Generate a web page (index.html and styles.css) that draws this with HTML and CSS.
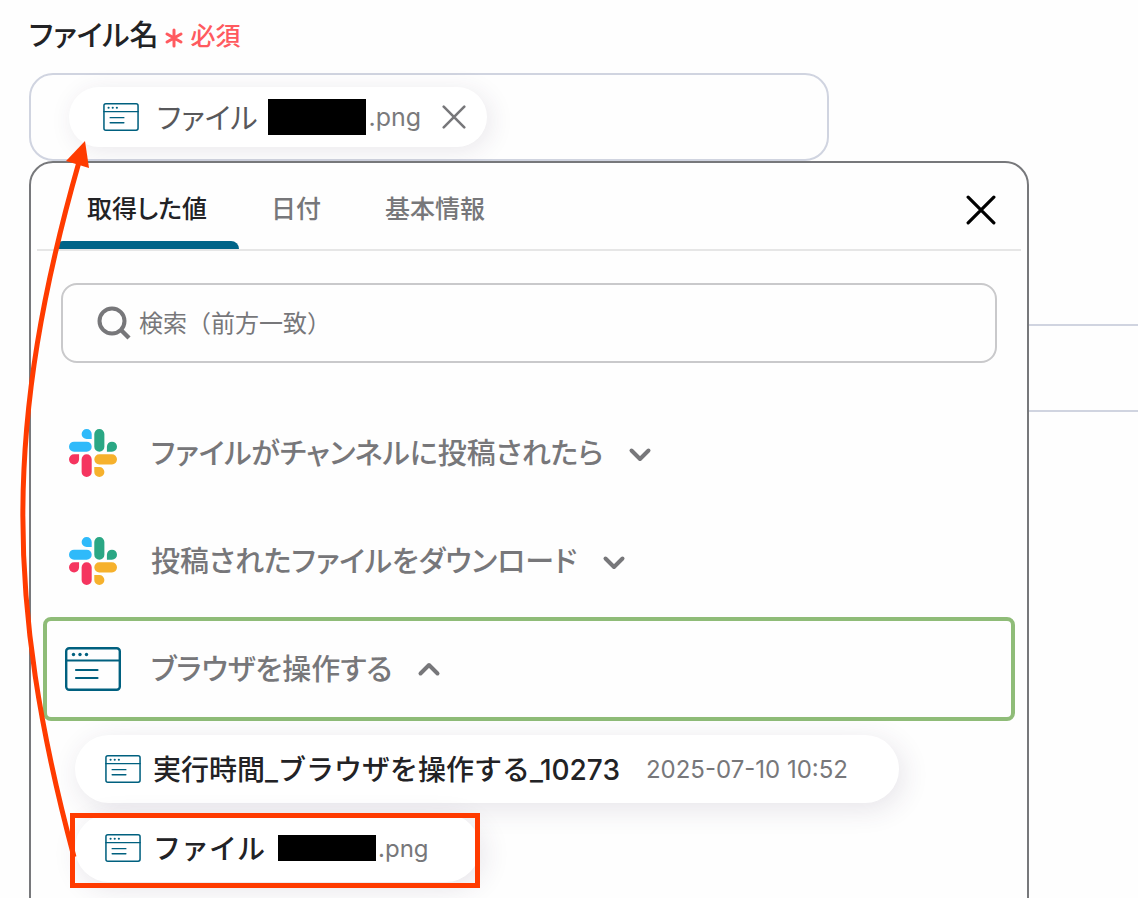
FILE: index.html
```html
<!DOCTYPE html>
<html lang="ja">
<head>
<meta charset="utf-8">
<title>ファイル名</title>
<link rel="stylesheet" href="styles.css">
</head>
<body>
<svg class="sprite" aria-hidden="true">
  <symbol id="browser" viewBox="0 0 56 44">
    <rect x="1.200" y="1.200" width="53.600" height="41.600" rx="3" fill="none" stroke="currentColor" stroke-width="2.400"/>
    <path d="M1 13.500H55M11 23H32.500M11 31H32.500" fill="none" stroke="currentColor" stroke-width="2.200" stroke-linecap="round"/>
    <circle cx="8.500" cy="7.500" r="1.700" fill="currentColor"/><circle cx="15" cy="7.500" r="1.700" fill="currentColor"/><circle cx="21.500" cy="7.500" r="1.700" fill="currentColor"/>
  </symbol>
  <symbol id="slack" viewBox="0 0 24 24">
    <path fill="#f5355f" d="M5.042 15.165a2.528 2.528 0 0 1-2.52 2.523A2.528 2.528 0 0 1 0 15.165a2.527 2.527 0 0 1 2.522-2.52h2.52v2.52zM6.313 15.165a2.527 2.527 0 0 1 2.521-2.52 2.527 2.527 0 0 1 2.521 2.520v6.313A2.528 2.528 0 0 1 8.834 24a2.528 2.528 0 0 1-2.521-2.522v-6.313z"/>
    <path fill="#2fbafa" d="M8.834 5.042a2.528 2.528 0 0 1-2.521-2.520A2.528 2.528 0 0 1 8.834 0a2.528 2.528 0 0 1 2.521 2.522v2.520H8.834zM8.834 6.313a2.528 2.528 0 0 1 2.521 2.521 2.528 2.528 0 0 1-2.521 2.521H2.522A2.528 2.528 0 0 1 0 8.834a2.528 2.528 0 0 1 2.522-2.521h6.312z"/>
    <path fill="#2aa784" d="M18.956 8.834a2.528 2.528 0 0 1 2.522-2.521A2.528 2.528 0 0 1 24 8.834a2.528 2.528 0 0 1-2.522 2.521h-2.522V8.834zM17.688 8.834a2.528 2.528 0 0 1-2.523 2.521 2.527 2.527 0 0 1-2.520-2.521V2.522A2.527 2.527 0 0 1 15.165 0a2.528 2.528 0 0 1 2.523 2.522v6.312z"/>
    <path fill="#f6b12c" d="M15.165 18.956a2.528 2.528 0 0 1 2.523 2.522A2.528 2.528 0 0 1 15.165 24a2.527 2.527 0 0 1-2.520-2.522v-2.522h2.520zM15.165 17.688a2.527 2.527 0 0 1-2.520-2.523 2.526 2.526 0 0 1 2.520-2.520h6.313A2.527 2.527 0 0 1 24 15.165a2.528 2.528 0 0 1-2.522 2.523h-6.313z"/>
  </symbol>
  <symbol id="chevron" viewBox="0 0 24 24">
    <path d="M3.500 8.500L12 17L20.500 8.500" fill="none" stroke="currentColor" stroke-width="4" stroke-linecap="round" stroke-linejoin="round"/>
  </symbol>
  <symbol id="cross" viewBox="0 0 28 28">
    <path d="M2 2L26 26M26 2L2 26" fill="none" stroke="currentColor" stroke-width="3" stroke-linecap="round"/>
  </symbol>
</svg>

<main class="form">
  <h1 class="label">
    <span>ファイル名</span>
    <svg class="label-star" viewBox="0 0 20 20" aria-hidden="true"><path d="M10 2V18M3 6L17 14M17 6L3 14" stroke="currentColor" stroke-width="3" stroke-linecap="round"/></svg>
    <span class="label-required">必須</span>
  </h1>

  <div class="field">
    <div class="token">
      <svg class="icon-small" aria-hidden="true"><use href="#browser"/></svg>
      <span class="token-name">ファイル</span>
      <span class="mask"></span>
      <span class="token-value">.png</span>
      <button class="token-remove" type="button" aria-label="削除"><svg aria-hidden="true"><use href="#cross"/></svg></button>
    </div>

    <section class="panel">
      <div class="tabs">
        <button class="tab tab-active" type="button">取得した値</button>
        <button class="tab" type="button">日付</button>
        <button class="tab" type="button">基本情報</button>
        <button class="panel-close" type="button" aria-label="閉じる"><svg aria-hidden="true"><use href="#cross"/></svg></button>
      </div>

      <label class="search">
        <svg class="search-icon" viewBox="0 0 34 34" aria-hidden="true"><circle cx="15" cy="15" r="12.500" fill="none" stroke="currentColor" stroke-width="4"/><path d="M24 24L32 32" stroke="currentColor" stroke-width="4.500"/></svg>
        <input type="text" placeholder="検索（前方一致）" aria-label="検索">
      </label>

      <div class="groups">
        <button class="group" type="button">
          <span class="group-icon"><svg class="slack" aria-hidden="true"><use href="#slack"/></svg></span>
          <span class="group-name">ファイルがチャンネルに投稿されたら</span>
          <svg class="chevron" aria-hidden="true"><use href="#chevron"/></svg>
        </button>
        <button class="group" type="button">
          <span class="group-icon"><svg class="slack" aria-hidden="true"><use href="#slack"/></svg></span>
          <span class="group-name">投稿されたファイルをダウンロード</span>
          <svg class="chevron" aria-hidden="true"><use href="#chevron"/></svg>
        </button>
        <button class="group group-open" type="button">
          <span class="group-icon"><svg class="icon-large" aria-hidden="true"><use href="#browser"/></svg></span>
          <span class="group-name">ブラウザを操作する</span>
          <svg class="chevron chevron-up" aria-hidden="true"><use href="#chevron"/></svg>
        </button>
      </div>

      <div class="values">
        <button class="value" type="button">
          <svg class="icon-small" aria-hidden="true"><use href="#browser"/></svg>
          <span class="value-name">実行時間_ブラウザを操作する_10273</span>
          <span class="value-time">2025-07-10 10:52</span>
        </button>
        <button class="value value-marked" type="button">
          <svg class="icon-small" aria-hidden="true"><use href="#browser"/></svg>
          <span class="value-name">ファイル</span>
          <span class="mask mask-low"></span>
          <span class="value-text">.png</span>
        </button>
      </div>
    </section>
  </div>

  <div class="field field-next"></div>

  <svg class="arrow" viewBox="0 0 100 760" aria-hidden="true">
    <path d="M74 757C5 500 5 321 79 62" fill="none" stroke="#ff3b00" stroke-width="5"/>
    <path d="M85 41L66 61L89 68Z" fill="#ff3b00"/>
  </svg>
</main>
</body>
</html>
```
FILE: styles.css
```css
* { box-sizing: border-box; }

body {
  margin: 0;
  background: #fefefe;
  color: #222225;
  font-family: Inter, "Noto Sans CJK JP", sans-serif;
  font-size: 24px;
}

button {
  margin: 0;
  padding: 0;
  border: 0;
  background: none;
  color: inherit;
  font: inherit;
  cursor: pointer;
}

svg { display: block; flex: none; }

.sprite { position: absolute; width: 0; height: 0; }

.form {
  position: relative;
  height: 100vh;
  padding: 16px 0 0 29px;
  overflow: hidden;
}

.label {
  display: flex;
  align-items: center;
  margin: 0 0 17px;
  font-size: 29px;
  font-weight: 500;
  line-height: 40px;
  font-feature-settings: "palt";
}

.label-star { width: 20px; height: 20px; margin: 4px 6px 0 6px; color: #ff5a5f; }
.label-required { color: #ff5a5f; font-size: 25px; }

.field {
  position: relative;
  display: flex;
  align-items: center;
  max-width: 800px;
  height: 88px;
  padding: 0 38px;
  border: 2px solid #d0d4e0;
  border-radius: 24px;
}

.field-next {
  max-width: none;
  margin-top: 163px;
  border-right: 0;
  border-radius: 24px 0 0 24px;
}

.token {
  display: flex;
  align-items: center;
  height: 60px;
  padding: 0 21px 0 34px;
  border-radius: 30px;
  background: #fff;
  box-shadow: 4px 4px 24px rgba(60, 40, 80, 0.1);
}

.icon-small { width: 36px; height: 28px; color: #00607f; }
.icon-large { width: 56px; height: 44px; color: #00607f; }

.token-name {
  margin: 0 11px 0 18px;
  padding-bottom: 3px;
  color: #58585b;
  font-size: 29px;
  font-feature-settings: "palt";
}

.mask { width: 98px; height: 36px; background: #000; }
.mask-low { height: 26px; }

.token-value {
  margin-left: 2px;
  color: #7a7a7c;
  font-size: 25px;
}

.token-remove { margin-left: 21px; color: #77777a; }
.token-remove svg { width: 24px; height: 24px; }

.panel {
  position: absolute;
  z-index: 1;
  top: 86px;
  left: -2px;
  width: 1000px;
  max-width: calc(100vw - 58px);
  padding-bottom: 60px;
  border: 2px solid #77787b;
  border-radius: 24px;
  background: #fefefe;
}

.tabs {
  display: flex;
  height: 88px;
  margin: 0 6px;
  padding: 0 25px 0 18px;
  border-bottom: 2px solid #e6e6e6;
}

.tab {
  position: relative;
  padding: 2px 32px 0;
  color: #77777a;
  font-size: 25px;
  font-weight: 500;
  font-feature-settings: "palt";
}

.tab-active { color: #222225; }

.tab-active::after {
  content: "";
  position: absolute;
  inset: auto 0 0;
  height: 8px;
  border-radius: 8px 8px 0 0;
  background: #006488;
}

.panel-close { margin-left: auto; padding-top: 8px; color: #000; }
.panel-close svg { width: 30px; height: 30px; }

.search {
  display: flex;
  align-items: center;
  gap: 8px;
  height: 80px;
  margin: 32px 30px 38px;
  padding: 0 32px 0 34px;
  border: 2px solid #c9c9cb;
  border-radius: 16px;
}

.search-icon { width: 34px; height: 34px; color: #77777a; }

.search input {
  flex: 1;
  min-width: 0;
  padding: 0;
  border: 0;
  outline: 0;
  background: none;
  color: #222225;
  font: inherit;
}

.search input::placeholder { color: #77777a; opacity: 1; }

.groups {
  display: flex;
  flex-direction: column;
  gap: 4px;
  margin: 0 12px 14px;
}

.group {
  display: flex;
  align-items: center;
  height: 104px;
  padding: 0 18px;
  border: 4px solid transparent;
  border-radius: 8px;
  color: #77777a;
  font-size: 29px;
  font-weight: 500;
  font-feature-settings: "palt";
}

.group-open { border-color: #8fbc78; }

.group-icon {
  display: flex;
  justify-content: center;
  width: 56px;
  margin-right: 30px;
}

.group-name { padding-bottom: 4px; }

.slack { width: 48px; height: 48px; }
.chevron { width: 24px; height: 24px; margin: 2px 0 0 25px; }
.chevron-up { transform: rotate(180deg); }

.values {
  display: flex;
  flex-direction: column;
  align-items: flex-start;
  gap: 11px;
  padding-left: 44px;
}

.value {
  display: flex;
  align-items: center;
  height: 68px;
  padding: 0 51px 0 30px;
  border-radius: 34px;
  background: #fff;
  box-shadow: 4px 6px 28px rgba(60, 40, 80, 0.12);
}

.value-name {
  margin-left: 12px;
  padding-bottom: 3px;
  font-size: 28px;
  font-weight: 500;
}

.value-time { margin-left: 26px; color: #77777a; }
.value-text { margin-left: 2px; color: #77777a; }
.value .mask { margin-left: 13px; }

.value-marked { position: relative; }

.value-marked::after {
  content: "";
  position: absolute;
  inset: -1px 0 -6px -5px;
  border: 5px solid #ff3b00;
}

.arrow {
  position: absolute;
  z-index: 2;
  top: 100px;
  left: 0;
  width: 100px;
  height: 760px;
}
```
